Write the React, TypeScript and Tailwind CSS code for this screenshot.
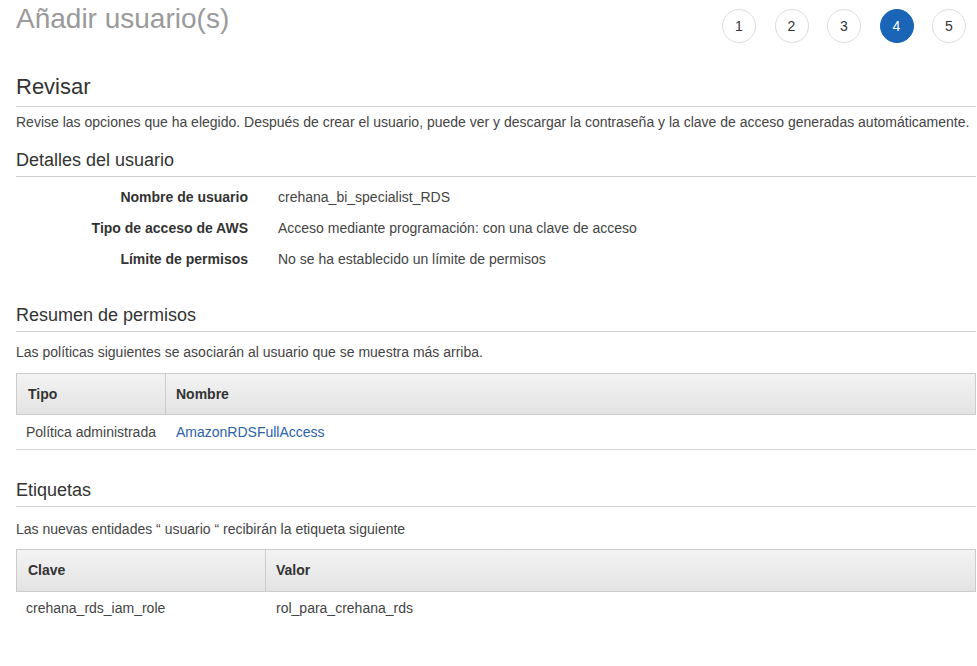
import React from "react";

const font = { fontFamily: '"Liberation Sans", Arial, Helvetica, sans-serif' };

function Steps() {
  const steps = [1, 2, 3, 4, 5];
  return (
    <div className="flex gap-[18.5px] pr-[10px] mt-[9px]">
      {steps.map((s) => (
        <div
          key={s}
          className={
            s === 4
              ? "w-[34px] h-[34px] rounded-full bg-[#1a65b8] border border-[#1a65b8] text-white flex items-center justify-center text-[14px]"
              : "w-[34px] h-[34px] rounded-full bg-white border border-[#dedede] text-[#333] flex items-center justify-center text-[14px]"
          }
        >
          {s}
        </div>
      ))}
    </div>
  );
}

export default function App() {
  return (
    <div className="w-[977px] h-[666px] bg-white pl-4 pr-[1px] overflow-hidden text-[#444]" style={font}>
      <div className="flex justify-between items-start h-[43px]">
        <h1 className="mt-[3px] text-[28px] leading-[32px] text-[#9a9a9a] font-normal">Añadir usuario(s)</h1>
        <Steps />
      </div>

      <h2 className="mt-[31px] text-[22px] leading-[26px] text-[#333] pb-[6px] border-b border-[#cfcfcf]">Revisar</h2>
      <p className="mt-[5px] text-[14px] leading-[20px] text-[#444]">
        Revise las opciones que ha elegido. Después de crear el usuario, puede ver y descargar la contraseña y la clave de acceso generadas automáticamente.
      </p>

      <h3 className="mt-[17px] text-[18px] leading-[22px] text-[#333] pb-[5px] border-b border-[#cfcfcf]">Detalles del usuario</h3>
      <div className="mt-[10px] grid grid-cols-[232px_1fr] gap-x-[30px] gap-y-[11px] text-[14px] leading-[20px]">
        <div className="text-right font-bold text-[#333]">Nombre de usuario</div>
        <div>crehana_bi_specialist_RDS</div>
        <div className="text-right font-bold text-[#333]">Tipo de acceso de AWS</div>
        <div>Acceso mediante programación: con una clave de acceso</div>
        <div className="text-right font-bold text-[#333]">Límite de permisos</div>
        <div>No se ha establecido un límite de permisos</div>
      </div>

      <h3 className="mt-[35px] text-[18px] leading-[22px] text-[#333] pb-[5px] border-b border-[#cfcfcf]">Resumen de permisos</h3>
      <p className="mt-[10px] text-[14px] leading-[20px]">Las políticas siguientes se asociarán al usuario que se muestra más arriba.</p>

      <div className="mt-[11px] text-[14px]">
        <div className="flex h-[42px] border border-[#cccccc] bg-gradient-to-b from-[#f3f3f3] to-[#e3e3e3] font-bold text-[#333]">
          <div className="w-[149px] pl-[11px] flex items-center border-r border-[#cccccc]">Tipo</div>
          <div className="flex-1 pl-[10px] flex items-center">Nombre</div>
        </div>
        <div className="flex h-[35px] border-b border-[#d5d5d5] items-center">
          <div className="w-[150px] pl-[10px]">Política administrada</div>
          <div className="flex-1 pl-[10px] text-[#2b62ad]">AmazonRDSFullAccess</div>
        </div>
      </div>

      <h3 className="mt-[29px] text-[18px] leading-[22px] text-[#333] pb-[5px] border-b border-[#cfcfcf]">Etiquetas</h3>
      <p className="mt-[12px] text-[14px] leading-[20px]">Las nuevas entidades “ usuario “ recibirán la etiqueta siguiente</p>

      <div className="mt-[10px] text-[14px]">
        <div className="flex h-[43px] border border-[#cccccc] bg-gradient-to-b from-[#f3f3f3] to-[#e3e3e3] font-bold text-[#333]">
          <div className="w-[249px] pl-[11px] flex items-center border-r border-[#cccccc]">Clave</div>
          <div className="flex-1 pl-[10px] flex items-center">Valor</div>
        </div>
        <div className="flex h-[32px] items-center">
          <div className="w-[250px] pl-[10px]">crehana_rds_iam_role</div>
          <div className="flex-1 pl-[10px]">rol_para_crehana_rds</div>
        </div>
      </div>
    </div>
  );
}
